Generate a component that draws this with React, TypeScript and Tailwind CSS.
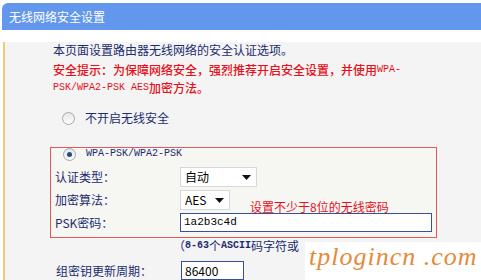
import { ReactNode } from "react"

const cn = "font-['Noto_Sans_CJK_SC','Noto_Sans',sans-serif]"
const mono = "font-['Liberation_Mono','Noto_Sans_CJK_SC',monospace]"

const Radio = ({ checked }: { checked?: boolean }) => (
	<span className="flex h-[13px] w-[13px] items-center justify-center rounded-full border border-[#a8a8a8] bg-gradient-to-b from-[#e6e6e6] to-[#ffffff]">
		{checked && <span className="h-[5px] w-[5px] rounded-full bg-[#1f4f86]" />}
	</span>
)

const Select = ({ value, width }: { value: string; width: string }) => (
	<div className={`flex h-[20px] items-center justify-between border border-[#d8d8d8] bg-white pl-[4px] pr-[5px] ${width}`}>
		<span className="text-[12px] leading-[14px] text-black">{value}</span>
		<svg width="9" height="5" viewBox="0 0 9 5">
			<path d="M0 0h9L4.5 5z" fill="#111" />
		</svg>
	</div>
)

const Row = ({ label, children, className = "" }: { label: string; children: ReactNode; className?: string }) => (
	<div className={`flex items-center ${className}`}>
		<span className="w-[125px] text-[12px] leading-[14px] text-[#1c2c6e]">{label}</span>
		{children}
	</div>
)

export default function App() {
	return (
		<div className={`relative h-[280px] w-[481px] overflow-hidden bg-white ${cn}`}>
			<div className="pt-[3px] pl-[2px]">
				<div className="flex h-[27px] items-center rounded-tl-[6px] bg-[#6397ee] pl-[7px] text-[12px] leading-[14px] text-white">
					无线网络安全设置
				</div>
			</div>
			<div className="ml-[3px] h-[250px] border-l-2 border-[#f3c878] bg-[#f4f4f4] pl-[48px]">
				<div className="flex h-[16px] items-center pt-0 mt-[12px] text-[12px] leading-[14px] text-[#1c2c6e]">
					本页面设置路由器无线网络的安全认证选项。
				</div>
				<div className="mt-[3px] flex h-[18px] items-center text-[12px] leading-[14px] font-medium text-[#e8101a]">
					安全提示：为保障网络安全，强烈推荐开启安全设置，并使用<span className={`${mono} text-[10px] leading-[14px]`}>WPA-</span>
				</div>
				<div className="flex h-[18px] items-center text-[12px] leading-[14px] font-medium text-[#e8101a]">
					<span className={`${mono} text-[10px] leading-[14px] whitespace-pre`}>PSK/WPA2-PSK AES</span>加密方法。
				</div>
				<div className="mt-[13px] flex h-[16px] items-center gap-[10px] pl-[9px]">
					<Radio />
					<span className="text-[12px] leading-[14px] text-[#1c2c6e]">不开启无线安全</span>
				</div>
				<div className="mt-[21px] mr-[44px] ml-[-3px] h-[91px] border border-[#e05a5a] bg-[#f6f6f3] pl-[4px]">
					<div className="flex h-[12px] items-center gap-[10px] pl-[8px]">
						<Radio checked />
						<span className={`${mono} text-[10px] leading-[12px] text-[#1c2c6e]`}>WPA-PSK/WPA2-PSK</span>
					</div>
					<Row label="认证类型：" className="mt-[7px]">
						<Select value="自动" width="w-[77px]" />
					</Row>
					<Row label="加密算法：" className="mt-[3px]">
						<Select value="AES" width="w-[50px]" />
						<span className="ml-[20px] translate-y-[7px] text-[12px] leading-[14px] text-[#e8101a]">设置不少于8位的无线密码</span>
					</Row>
					<Row label="PSK密码：" className="mt-[3px]">
						<div className={`flex h-[19px] w-[252px] items-center border border-[#3a4f9c] bg-white pl-[3px] text-[11px] leading-[13px] text-black ${mono}`}>
							1a2b3c4d
						</div>
					</Row>
				</div>
				<div className="flex h-[16px] items-center pl-[120px] text-[12px] leading-[14px] text-[#1c2c6e]">
					（<span className={`${mono} text-[10px] font-bold`}>8-63</span>个<span className={`${mono} text-[10px] font-bold`}>ASCII</span>码字符或
				</div>
				<Row label="组密钥更新周期：" className="mt-[7px] pl-[3px]">
					<div className="flex h-[19px] w-[63px] items-center border border-[#3a4f9c] bg-white pl-[3px] text-[12px] leading-[14px] text-black">86400</div>
				</Row>
			</div>
			<div className="absolute top-[242px] left-[305px] h-[38px] w-[176px] bg-white pl-[4px]">
				<span className="font-['Liberation_Serif',serif] text-[26px] italic leading-[30px] tracking-[1px] whitespace-nowrap text-[#e58a3a]">
					tplogincn .com
				</span>
			</div>
		</div>
	)
}
